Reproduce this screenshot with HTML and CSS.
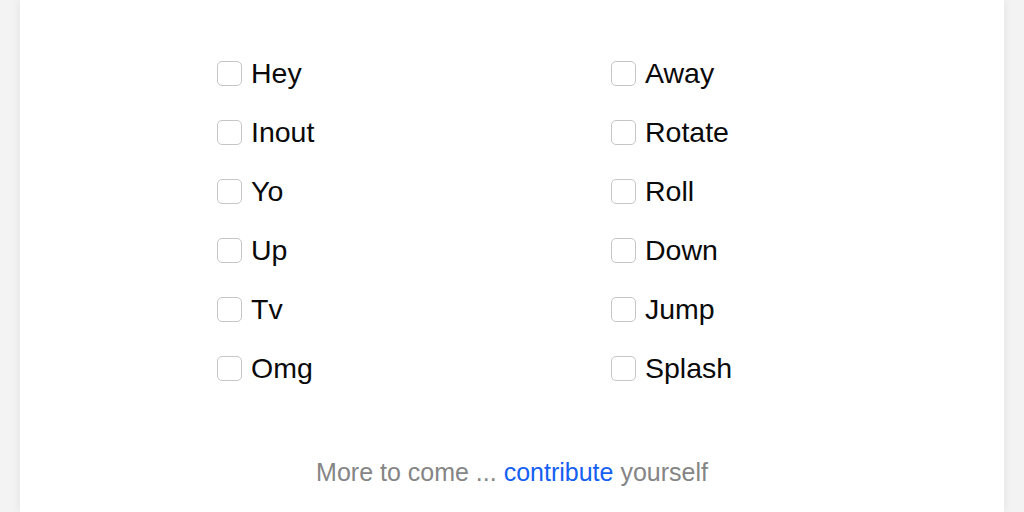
FILE: index.html
```html
<!DOCTYPE html>
<html>
<head>
<meta charset="utf-8">
<link rel="stylesheet" href="styles.css">
</head>
<body>
<div class="card">
  <div class="options">
    <label class="opt"><input type="checkbox"><span>Hey</span></label>
    <label class="opt"><input type="checkbox"><span>Away</span></label>
    <label class="opt"><input type="checkbox"><span>Inout</span></label>
    <label class="opt"><input type="checkbox"><span>Rotate</span></label>
    <label class="opt"><input type="checkbox"><span>Yo</span></label>
    <label class="opt"><input type="checkbox"><span>Roll</span></label>
    <label class="opt"><input type="checkbox"><span>Up</span></label>
    <label class="opt"><input type="checkbox"><span>Down</span></label>
    <label class="opt"><input type="checkbox"><span>Tv</span></label>
    <label class="opt"><input type="checkbox"><span>Jump</span></label>
    <label class="opt"><input type="checkbox"><span>Omg</span></label>
    <label class="opt"><input type="checkbox"><span>Splash</span></label>
  </div>
  <p class="more">More to come ... <a href="#">contribute</a> yourself</p>
</div>
</body>
</html>
```
FILE: styles.css
```css
html, body {
  margin: 0;
  padding: 0;
  background: #f3f3f3;
  height: 100%;
  overflow: hidden;
}
body {
  font-family: "Liberation Sans", Arial, Helvetica, sans-serif;
}
.card {
  margin: 0 20px;
  background: #fff;
  height: 100%;
  box-shadow: 0 0 10px rgba(0, 0, 0, 0.07);
  padding-top: 44px;
  box-sizing: border-box;
}
.options {
  display: grid;
  grid-template-columns: 394px 196px;
  grid-auto-rows: 59px;
  width: 590px;
  margin: 0 auto;
}
.opt {
  display: flex;
  align-items: center;
  gap: 9px;
  font-size: 28.5px;
  color: #0a0a0a;
  line-height: 1;
}
.opt input {
  appearance: none;
  -webkit-appearance: none;
  margin: 0;
  width: 25px;
  height: 25px;
  border: 1.5px solid #c6c6c6;
  border-radius: 5px;
  background: #fff;
  box-sizing: border-box;
  flex: none;
}
.more {
  margin: 59px 0 0;
  text-align: center;
  font-size: 25px;
  line-height: 30px;
  color: #858585;
}
.more a {
  color: #1560f2;
  text-decoration: none;
}
```
